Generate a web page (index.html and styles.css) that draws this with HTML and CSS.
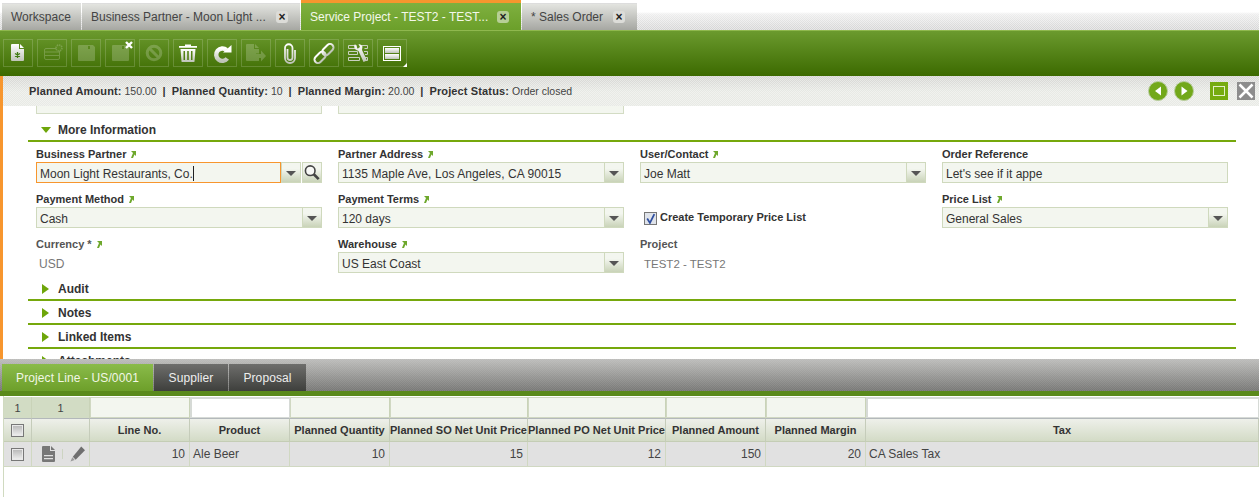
FILE: index.html
```html
<!DOCTYPE html>
<html lang="en">
<head>
<meta charset="utf-8">
<title>Service Project</title>
<link rel="stylesheet" href="styles.css">
</head>
<body>
<nav class="tabbar">
  <div class="tab tab-home">Workspace</div>
  <div class="tab tab-bp"><span>Business Partner - Moon Light ...</span><b class="tab-x">×</b></div>
  <div class="tab tab-active"><span>Service Project - TEST2 - TEST...</span><b class="tab-x">×</b></div>
  <div class="tab tab-so"><span>* Sales Order</span><b class="tab-x">×</b></div>
</nav>

<div class="toolbar">
  <button class="tb"><svg viewBox="0 0 30 28" class="tb-ico"><defs><linearGradient id="w" x1="0" y1="0" x2="0" y2="1"><stop offset="0" stop-color="#fff"/><stop offset="1" stop-color="#bfc4b8"/></linearGradient></defs><path d="M8 6q0-1 1-1h7v5h5v11q0 1-1 1H9q-1 0-1-1z" fill="url(#w)"/><path d="M17 5l4 4h-4z" fill="#fff"/><path d="M14.500 13v6M12 14.500l5 3M17 14.500l-5 3" stroke="#3f7a10" stroke-width="1.300"/></svg></button>
  <button class="tb tb-off"><svg viewBox="0 0 30 28" class="tb-ico"><rect x="7.500" y="9.500" width="15" height="11" rx="1.500" fill="none" stroke="#fff" stroke-width="1"/><path d="M8 13h14M8 16.500h14" stroke="#fff"/><circle cx="22" cy="9" r="3" fill="#6b9b38" stroke="#fff" stroke-width="1.500" stroke-dasharray="1.500 .8"/></svg></button>
  <button class="tb tb-off"><svg viewBox="0 0 30 28" class="tb-ico"><path d="M7 7q0-1 1-1h14l2 2v13q0 1-1 1H8q-1 0-1-1zM17 7v3h2V7z" fill="#fff" fill-rule="evenodd"/></svg></button>
  <button class="tb tb-off"><svg viewBox="0 0 30 28" class="tb-ico"><path d="M7 7q0-1 1-1h14l2 2v13q0 1-1 1H8q-1 0-1-1zM17 7v3h2V7z" fill="#fff" fill-rule="evenodd"/></svg><svg viewBox="0 0 8 8" class="tb-badge"><path d="M1 1l6 6M7 1l-6 6" stroke="#fff" stroke-width="2.400"/></svg></button>
  <button class="tb tb-off"><svg viewBox="0 0 30 28" class="tb-ico"><circle cx="15" cy="14" r="6.800" fill="none" stroke="#fff" stroke-width="3"/><path d="M10 9l10 10" stroke="#fff" stroke-width="3"/></svg></button>
  <button class="tb"><svg viewBox="0 0 30 28" class="tb-ico"><path d="M6 7h18v1.800H6zM12 7V5.500h6V7z" fill="#fff"/><path d="M7.500 10h15l-1 12.500q-.1.500-1 .5h-11q-.9 0-1-.5zM10.500 12v9h1.500v-9zM14.200 12v9h1.600v-9zM18 12v9h1.500v-9z" fill="url(#w)" fill-rule="evenodd"/></svg></button>
  <button class="tb"><svg viewBox="0 0 30 28" class="tb-ico"><path d="M20.300 19.500A6.200 6.200 0 1 1 19.500 11" fill="none" stroke="url(#w)" stroke-width="4.400"/><path d="M16 13.500h8.500V6z" fill="#fff"/></svg></button>
  <button class="tb tb-off"><svg viewBox="0 0 30 28" class="tb-ico"><path d="M5 6q0-1 1-1h7v5h5v4.500h-3V11H15v8h3v3H6q-1 0-1-1z" fill="#fff"/><path d="M14 5l4 4h-4zM15 15h5v-3.500l5 5.500-5 5.500V19h-5z" fill="#fff"/></svg></button>
  <button class="tb"><svg viewBox="0 0 30 28" class="tb-ico"><path d="M12.500 10v8.500a2.500 2.500 0 0 0 5 0V9a3.700 3.700 0 0 0-7.500 0v10a5 5 0 0 0 10 0v-8" fill="none" stroke="url(#w)" stroke-width="1.800"/></svg></button>
  <button class="tb"><svg viewBox="0 0 30 28" class="tb-ico"><g fill="none" stroke="url(#w)" stroke-width="2" transform="rotate(-45 15 14.500)"><rect x="3" y="11" width="13" height="7" rx="3.500"/><rect x="14" y="11" width="13" height="7" rx="3.500"/></g></svg></button>
  <button class="tb"><svg viewBox="0 0 30 28" class="tb-ico"><g fill="none" stroke="#c9d0c0" stroke-width="1"><path d="M5.500 6.500h8v3h-8zM17.500 6.500h7v3h-3M5.500 12.500h9v3h-9zM21 12.500h3.500v3H22M5.500 18.500h11v3h-11zM22 18.500h2.500v3H22"/></g><path d="M12 5a4.500 4.500 0 0 0 .5 5.500l3 1.500 5 11 3.500-1.500-5-10.500.5-3.500A4.500 4.500 0 0 0 15.500 5l1.500 3-2.300 1.700z" fill="url(#w)"/></svg></button>
  <button class="tb tb-last"><svg viewBox="0 0 30 28" class="tb-ico"><rect x="6.500" y="7.500" width="17" height="14" fill="none" stroke="#fff"/><rect x="8" y="9" width="14" height="5" fill="url(#w)"/><rect x="8" y="15" width="14" height="5" fill="url(#w)"/></svg></button>
</div>

<div class="status">
  <p class="status-text"><b>Planned Amount:</b> 150.00 <b class="sep">|</b> <b>Planned Quantity:</b> 10 <b class="sep">|</b> <b>Planned Margin:</b> 20.00 <b class="sep">|</b> <b>Project Status:</b> Order closed</p>
  <div class="status-nav">
    <svg class="nav-ico" viewBox="0 0 20 20"><circle cx="10" cy="10" r="9.500" fill="#72a81a" stroke="#b9cda0"/><path d="M13 5.500v9L7 10z" fill="#fff"/></svg>
    <svg class="nav-ico nav-next" viewBox="0 0 20 20"><circle cx="10" cy="10" r="9.500" fill="#72a81a" stroke="#b9cda0"/><path d="M7.500 5.500v9l6-4.500z" fill="#fff"/></svg>
    <svg class="win-ico win-max" viewBox="0 0 18 18"><rect width="18" height="18" fill="#76ab10"/><rect x="3.500" y="4.500" width="11" height="9" fill="none" stroke="#e3eec8" stroke-width="1"/></svg>
    <svg class="win-ico" viewBox="0 0 18 18"><rect width="18" height="18" fill="#8d8d8d"/><path d="M2.500 2.500l13 13M15.500 2.500l-13 13" stroke="#fff" stroke-width="2.500"/></svg>
  </div>
</div>

<main class="form">
  <div class="stub-row"><div class="stub"></div><div class="stub"></div></div>

  <h3 class="section section-first"><i class="tri-down"></i>More Information</h3>
  <div class="fields">
    <div class="field">
      <label class="lbl">Business Partner<svg class="lnk" viewBox="0 0 6 8"><path d="M1 1h5v5L4.500 4.500 3 8H1l2-5z"/></svg></label>
      <div class="control"><div class="input input-focus">Moon Light Restaurants, Co.<i class="caret"></i></div><i class="drop"></i><i class="search"><svg viewBox="0 0 18 18"><circle cx="7" cy="7" r="5.400" fill="#f7f8f5" stroke="#444" stroke-width="1.800"/><path d="M11 11l5.500 5.500" stroke="#444" stroke-width="3"/></svg></i></div>
    </div>
    <div class="field">
      <label class="lbl">Partner Address<svg class="lnk" viewBox="0 0 6 8"><path d="M1 1h5v5L4.500 4.500 3 8H1l2-5z"/></svg></label>
      <div class="control"><div class="input input-wide">1135 Maple Ave, Los Angeles, CA 90015</div><i class="drop"></i></div>
    </div>
    <div class="field">
      <label class="lbl">User/Contact<svg class="lnk" viewBox="0 0 6 8"><path d="M1 1h5v5L4.500 4.500 3 8H1l2-5z"/></svg></label>
      <div class="control"><div class="input">Joe Matt</div><i class="drop"></i></div>
    </div>
    <div class="field">
      <label class="lbl">Order Reference</label>
      <div class="control"><div class="input">Let's see if it appe</div></div>
    </div>

    <div class="field">
      <label class="lbl">Payment Method<svg class="lnk" viewBox="0 0 6 8"><path d="M1 1h5v5L4.500 4.500 3 8H1l2-5z"/></svg></label>
      <div class="control"><div class="input">Cash</div><i class="drop"></i></div>
    </div>
    <div class="field">
      <label class="lbl">Payment Terms<svg class="lnk" viewBox="0 0 6 8"><path d="M1 1h5v5L4.500 4.500 3 8H1l2-5z"/></svg></label>
      <div class="control"><div class="input">120 days</div><i class="drop"></i></div>
    </div>
    <div class="field field-check">
      <i class="checkbox"><svg viewBox="0 0 10 10"><path d="M2 5l2.500 4L8.500 1" fill="none" stroke="#2f4fa0" stroke-width="1.600"/></svg></i>
      <span class="lbl-check">Create Temporary Price List</span>
    </div>
    <div class="field">
      <label class="lbl">Price List<svg class="lnk" viewBox="0 0 6 8"><path d="M1 1h5v5L4.500 4.500 3 8H1l2-5z"/></svg></label>
      <div class="control"><div class="input">General Sales</div><i class="drop"></i></div>
    </div>

    <div class="field">
      <label class="lbl lbl-ro">Currency *<svg class="lnk" viewBox="0 0 6 8"><path d="M1 1h5v5L4.500 4.500 3 8H1l2-5z"/></svg></label>
      <div class="readonly">USD</div>
    </div>
    <div class="field">
      <label class="lbl">Warehouse<svg class="lnk" viewBox="0 0 6 8"><path d="M1 1h5v5L4.500 4.500 3 8H1l2-5z"/></svg></label>
      <div class="control"><div class="input">US East Coast</div><i class="drop"></i></div>
    </div>
    <div class="field">
      <label class="lbl lbl-ro">Project</label>
      <div class="readonly readonly-b">TEST2 - TEST2</div>
    </div>
  </div>

  <h3 class="section"><i class="tri-right"></i>Audit</h3>
  <h3 class="section"><i class="tri-right"></i>Notes</h3>
  <h3 class="section"><i class="tri-right"></i>Linked Items</h3>
  <h3 class="section"><i class="tri-right"></i>Attachments</h3>
</main>

<div class="subtabs">
  <div class="subtab subtab-on">Project Line - US/0001</div>
  <div class="subtab subtab-sup">Supplier</div>
  <div class="subtab subtab-pro">Proposal</div>
</div>

<section class="grid-wrap">
  <table class="grid">
    <colgroup>
      <col class="c-a"><col class="c-b"><col class="c-n"><col class="c-n"><col class="c-n"><col class="c-w"><col class="c-w"><col class="c-n"><col class="c-n"><col>
    </colgroup>
    <thead>
      <tr class="filter">
        <td class="f-count">1</td><td class="f-count">1</td>
        <td class="f-in"></td><td class="f-white"></td><td class="f-in"></td><td class="f-in"></td><td class="f-in"></td><td class="f-in"></td><td class="f-in"></td><td class="f-white"></td>
      </tr>
      <tr class="head">
        <th><i class="gridcheck"></i></th><th></th>
        <th>Line No.</th><th>Product</th><th>Planned Quantity</th><th>Planned SO Net Unit Price</th><th>Planned PO Net Unit Price</th><th>Planned Amount</th><th>Planned Margin</th><th>Tax</th>
      </tr>
    </thead>
    <tbody>
      <tr class="row">
        <td><i class="gridcheck"></i></td>
        <td class="actions">
          <span class="actions-in">
            <svg class="act" viewBox="0 0 15 16"><path d="M1 1q0-1 1-1h7v5h5v10q0 1-1 1H2q-1 0-1-1zM3 9v1.300h9V9zM3 12v1.300h9V12z" fill="#777" fill-rule="evenodd"/><path d="M10 0l4 4h-4z" fill="#777"/></svg>
            <i class="act-sep"></i>
            <svg class="act" viewBox="0 0 16 16"><path d="M12 0l4 4-10 10-3-3z" fill="#6f6f6f"/><path d="M2.500 11.500l2.500 3-4.500 1.500z" fill="#9a9a9a"/></svg>
          </span>
        </td>
        <td class="num">10</td><td>Ale Beer</td><td class="num">10</td><td class="num">15</td><td class="num">12</td><td class="num">150</td><td class="num">20</td><td>CA Sales Tax</td>
      </tr>
    </tbody>
  </table>
</section>
</body>
</html>
```
FILE: styles.css
```css
* { box-sizing: border-box; }
html, body { margin: 0; padding: 0; }
body {
  width: 1259px;
  height: 497px;
  overflow: hidden;
  background: #fff;
  font-family: "Liberation Sans", Arial, sans-serif;
  font-size: 12px;
  color: #333;
}

/* top tabs */
.tabbar {
  display: flex;
  align-items: flex-end;
  gap: 1px;
  height: 30px;
  padding-left: 2px;
  background:
    repeating-conic-gradient(rgba(255,255,255,.45) 0 25%, rgba(255,255,255,0) 0 50%) 0 0 / 2px 2px,
    linear-gradient(#fff 0 12px, #eee 14px, #d4d4d4 30px);
}
.tab {
  display: flex;
  align-items: center;
  justify-content: space-between;
  height: 27px;
  padding: 0 12px 0 9px;
  color: #444;
  border-top: 1px solid #ddd;
  background: linear-gradient(#e3e4e0, #a6a7a2);
  font-size: 12px;
}
.tab-home { width: 79px; }
.tab-bp { width: 218px; }
.tab-active {
  width: 220px;
  height: 30px;
  color: #f4f8ea;
  border-top: 3px solid #f7962e;
  background: linear-gradient(#7fb03f, #6b9f2a);
}
.tab-so { width: 115px; }
.tab-x {
  display: flex;
  align-items: center;
  justify-content: center;
  width: 12px;
  height: 12px;
  border-radius: 3px;
  background: #dcdcd8;
  color: #222;
  font-size: 12px;
  line-height: 12px;
}
.tab-active .tab-x { background: #b7cf96; }

/* toolbar */
.toolbar {
  display: flex;
  gap: 4px;
  height: 46px;
  padding: 8px 0 0 3px;
  border-top: 1px solid #8fb84e;
  background: linear-gradient(#6b9a2e, #3c6a00);
}
.tb {
  position: relative;
  width: 30px;
  height: 28px;
  padding: 0;
  background: none;
  border: 1px solid rgba(255,255,255,.17);
}
.tb-ico {
  display: block;
  width: 30px;
  height: 28px;
  margin: -1px;
}
.tb-off .tb-ico { opacity: .2; }
.tb-badge {
  position: absolute;
  top: 0;
  right: 0;
  width: 8px;
  height: 8px;
  transform: translate(-1px, 1px);
}
.tb-last::after {
  content: "";
  position: absolute;
  right: -1px;
  bottom: -1px;
  border: 2px solid transparent;
  border-right-color: #fff;
  border-bottom-color: #fff;
}

/* status */
.status {
  display: flex;
  align-items: center;
  justify-content: space-between;
  height: 30px;
  padding: 0 4px 0 26px;
  border-left: 3px solid #f7962e;
  background:
    repeating-conic-gradient(rgba(255,255,255,.4) 0 25%, rgba(255,255,255,0) 0 50%) 0 0 / 2px 2px,
    linear-gradient(#d4d4d1, #e8eae5 55%);
  font-size: 10.500px;
}
.status-text { margin: 0; white-space: pre-wrap; color: #444; }
.status-text b { color: #333; font-size: 11px; letter-spacing: .13px; }
.status-text .sep { margin: 0 3px; }
.status-nav { display: flex; align-items: center; }
.nav-ico { width: 20px; height: 20px; }
.nav-next { margin-left: 6px; }
.win-ico { width: 18px; height: 18px; margin-left: 9px; }
.win-max { margin-left: 16px; }

/* form */
.form {
  height: 253px;
  overflow: hidden;
  border-left: 3px solid #f7962e;
}
.stub-row { display: flex; gap: 16px; padding-left: 33px; }
.stub {
  width: 286px;
  height: 8px;
  background: #f3f6ef;
  border: 1px solid #d3dcc4;
  border-top: 0;
}
.section {
  display: flex;
  align-items: center;
  height: 24px;
  margin: 0 0 0 25px;
  width: 1208px;
  padding: 1px 0 0 30px;
  border-bottom: 2px solid #76a80c;
  font-size: 12px;
  color: #333;
}
.section-first { margin-top: 4px; }
.tri-down {
  width: 0;
  margin: 0 7px 0 -17px;
  border: 5px solid transparent;
  border-bottom: 0;
  border-top: 6px solid #6ea60a;
}
.tri-right {
  width: 0;
  margin: 0 9px 0 -16px;
  border: 5px solid transparent;
  border-left: 7px solid #6ea60a;
  border-right: 0;
}
.fields {
  display: grid;
  grid-template-columns: repeat(4, 286px);
  column-gap: 16px;
  grid-auto-rows: 36px;
  row-gap: 9px;
  padding: 5px 0 4px 33px;
}
.lbl {
  display: flex;
  align-items: center;
  height: 15px;
  padding-bottom: 2px;
  font-size: 11px;
  font-weight: bold;
  color: #333;
}
.lbl-ro { color: #555; }
.lnk { width: 6px; height: 8px; margin-left: 4px; fill: #6ea82c; }
.control {
  display: flex;
  height: 21px;
}
.input {
  flex: 1;
  display: flex;
  align-items: center;
  height: 21px;
  padding: 2px 0 0 3px;
  background: #f3f6ef;
  border: 1px solid #cfd9bd;
  border-right: 0;
  font-size: 12px;
  color: #333;
  white-space: nowrap;
}
.input-wide { letter-spacing: .08px; }
.control > .input:last-child { border-right: 1px solid #cfd9bd; }
.input-focus { border: 1px solid #f7962e; }
.caret { width: 1px; height: 15px; margin-left: 0; background: #222; }
.drop {
  position: relative;
  flex: none;
  width: 20px;
  height: 21px;
  border: 1px solid #cfd9bd;
  border-left-width: 1px;
  background: linear-gradient(#f3f6ef 30%, #c9d3b8);
}
.drop::after {
  content: "";
  position: absolute;
  left: 4px;
  top: 8px;
  border: 5px solid transparent;
  border-bottom: 0;
  border-top: 5px solid #555;
}
.search {
  flex: none;
  width: 20px;
  height: 21px;
  margin-left: 1px;
  padding: 1px;
  border: 1px solid #cfd9bd;
  background: linear-gradient(#f3f6ef 30%, #c9d3b8);
}
.search svg { display: block; width: 16px; height: 17px; }
.readonly {
  height: 21px;
  padding: 3px 0 0 3px;
  line-height: 18px;
  color: #777;
  font-size: 12px;
}
.readonly-b { padding-left: 4px; font-size: 11.500px; }
.field-check {
  display: flex;
  align-items: flex-end;
  padding: 0 0 3px 4px;
}
.checkbox {
  width: 13px;
  height: 13px;
  padding: 1px;
  margin-right: 3px;
  background: #dfe3ea;
  border: 1px solid #777;
}
.checkbox svg { display: block; width: 11px; height: 11px; margin: -1px; }
.lbl-check { font-size: 11px; font-weight: bold; line-height: 15px; color: #333; }

/* sub tabs */
.subtabs {
  display: flex;
  align-items: flex-end;
  gap: 1px;
  height: 32px;
  padding-left: 2px;
  background:
    repeating-conic-gradient(rgba(255,255,255,.08) 0 25%, rgba(255,255,255,0) 0 50%) 0 0 / 2px 2px,
    linear-gradient(#bdbdbb, #777775);
}
.subtab {
  display: flex;
  align-items: center;
  justify-content: center;
  height: 27px;
  font-size: 12px;
  letter-spacing: .1px;
  color: #eee;
  background: linear-gradient(#6e6e6c, #3e3f3c);
}
.subtab-on {
  width: 151px;
  color: #f2f7e6;
  background: linear-gradient(#8abb4a, #6d9f2a);
}
.subtab-sup { width: 74px; }
.subtab-pro { width: 77px; }

/* grid */
.grid-wrap {
  height: 106px;
  padding: 1px 0 0 4px;
  border-top: 5px solid #5a8a1b;
  background: #fff;
  overflow: hidden;
  position: relative;
}
.grid-wrap::before {
  content: "";
  position: absolute;
  left: 3px;
  top: 0;
  bottom: 0;
  width: 1px;
  background: #d0dac0;
}
.grid {
  width: 1255px;
  table-layout: fixed;
  border-collapse: separate;
  border-spacing: 0;
  font-size: 12px;
  color: #444;
}
.c-a { width: 28px; }
.c-b { width: 58px; }
.c-n { width: 100px; }
.c-w { width: 138px; }
.grid td, .grid th { padding: 0; overflow: hidden; white-space: nowrap; }
.filter td {
  height: 21px;
  border-right: 1px solid #c9d3b8;
  text-align: center;
  font-size: 11px;
}
.f-count { background: #d2dcc4; }
.f-in { background: #f3f6ef; border: 1px solid #d0d8c2; border-width: 1px 2px 1px 1px; }
.grid .f-white { background: #fff; border: 2px solid #d6dad6; border-bottom-width: 1px; border-right-width: 1px; }
.head th {
  height: 24px;
  border-top: 1px solid #b3b8bb;
  border-bottom: 1px solid #c4cdb5;
  border-right: 1px solid #c5ccba;
  background: linear-gradient(#eef0ea, #d3dbc6);
  font-size: 11px;
  font-weight: bold;
  color: #333;
}
.row td {
  height: 25px;
  padding: 0 3px;
  background: #e1e1e1;
  border-right: 1px solid #d0d8c2;
  border-bottom: 1px solid #d0d8c2;
}
.row .num { text-align: right; padding-right: 4px; }
.gridcheck {
  display: block;
  width: 13px;
  height: 13px;
  margin: 1px 0 0 7px;
  border: 1px solid #777;
  background: linear-gradient(#b5b5b5, #f1f1f1);
  box-shadow: inset 0 0 0 1px #e9e9e9;
}
.row td:first-child { padding: 0; }
.row .actions { padding: 0; }
.actions-in { display: flex; align-items: center; padding-left: 9px; }
.act { width: 15px; height: 16px; }
.act-sep { width: 1px; height: 10px; margin: 0 7px 0 6px; background: #cdd4c2; }
```
